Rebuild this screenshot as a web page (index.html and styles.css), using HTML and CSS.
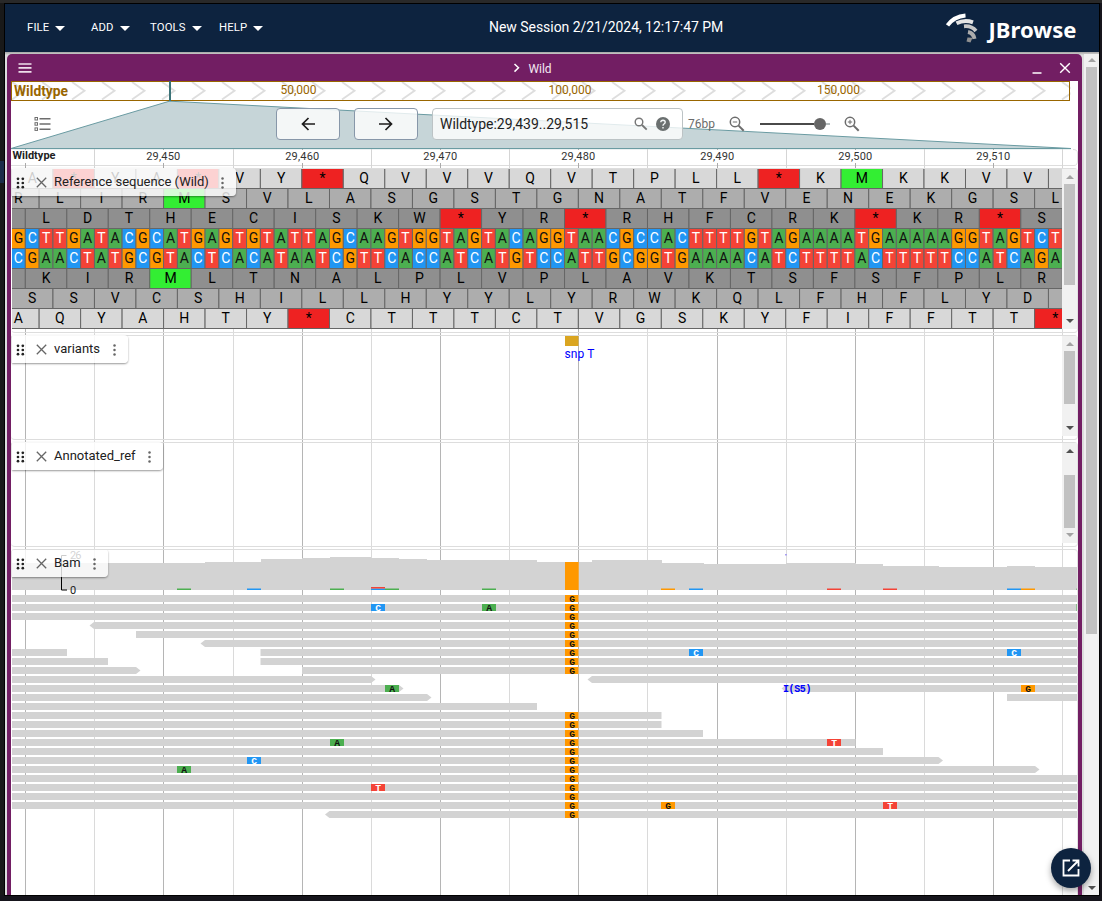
FILE: index.html
```html
<!DOCTYPE html>
<html lang="en">
<head>
<meta charset="utf-8">
<title>JBrowse</title>
<link rel="stylesheet" href="styles.css">
</head>
<body>
<div class="desktop">
  <div class="app">
    <header class="appbar">
      <nav class="menus">
        <button class="menu">FILE<i class="caret"></i></button>
        <button class="menu menu-add">ADD<i class="caret"></i></button>
        <button class="menu menu-tools">TOOLS<i class="caret"></i></button>
        <button class="menu menu-help">HELP<i class="caret"></i></button>
      </nav>
      <div class="session">New Session 2/21/2024, 12:17:47 PM</div>
      <svg class="logo" width="134" height="36" viewBox="944 11 134 36">
        <g fill="none">
          <path d="M947.500 26.300Q954 17.300 965.500 16.400" stroke="#fff" stroke-width="4"/>
          <path d="M956.500 24.300Q964.500 20.300 973 23.300" stroke="#e4e4e4" stroke-width="4"/>
          <path d="M964 27.300Q971.500 26.500 976 32" stroke="#c8c8c8" stroke-width="3.800"/>
          <path d="M968 33Q973.500 34 974.500 39.800" stroke="#acacac" stroke-width="4"/>
          <path d="M967.500 38.500L972.500 38.800L970.500 43.500L966.500 42.500Z" fill="#8f8f8f"/>
        </g>
        <text class="logo-text" x="988.500" y="38.500" textLength="88" lengthAdjust="spacingAndGlyphs">JBrowse</text>
      </svg>
    </header>
    <div class="workspace">
      <main class="view">
        <div class="view-bar">
          <svg width="16" height="12" viewBox="0 0 16 12"><path d="M1.500 2h13M1.500 5.900h13M1.500 9.900h13" stroke="#eedfec" stroke-width="1.700"/></svg>
          <div class="view-name"><svg width="8" height="10" viewBox="0 0 8 10"><path d="M1.500 1L5.500 4.800L1.500 8.600" fill="none" stroke="#fff" stroke-width="1.500"/></svg><span>Wild</span></div>
          <div class="view-actions">
            <svg width="10" height="12" viewBox="0 0 10 12"><path d="M.5 11h9" stroke="#fff" stroke-width="1.500"/></svg>
            <svg width="12" height="12" viewBox="0 0 12 12"><path d="M1.200 1.200l9.600 9.600M10.800 1.200l-9.600 9.600" stroke="#fff" stroke-width="1.400"/></svg>
          </div>
        </div>
        <div class="view-body">
          <svg class="overview" id="overview" width="1067" height="20" viewBox="11 81 1067 20"></svg>
          <div class="navigation">
            <svg class="zoom-shape" width="1067" height="48" viewBox="11 101 1067 48"><path d="M11 148.500L169 101.300H172L1071 148.500Z" fill="#c6d5d8" stroke="#6a9ba2"/></svg>
            <button class="selector"><svg width="18" height="16" viewBox="0 0 18 16"><g fill="none" stroke="#6d6d6d" stroke-width="1"><rect x="1" y="1.500" width="2.500" height="2.500"/><rect x="1" y="6.700" width="2.500" height="2.500"/><rect x="1" y="11.900" width="2.500" height="2.500"/><path d="M5.500 2.800H16.500M5.500 8H16.500M5.500 13.200H16.500" stroke-width="1.500"/></g></svg></button>
            <button class="pan pan-left"><svg width="16" height="16" viewBox="0 0 16 16"><path d="M15 8H2.500M8.500 2L2.500 8L8.500 14" fill="none" stroke="#1c1c1c" stroke-width="1.700"/></svg></button>
            <button class="pan pan-right"><svg width="16" height="16" viewBox="0 0 16 16"><path d="M1 8H13.500M7.500 2L13.500 8L7.500 14" fill="none" stroke="#1c1c1c" stroke-width="1.700"/></svg></button>
            <div class="search">
              <span class="location">Wildtype:29,439..29,515</span>
              <svg width="14" height="14" viewBox="0 0 14 14"><g fill="none" stroke="#767676"><circle cx="5" cy="5" r="3.800" stroke-width="1.400"/><path d="M8 8L12.700 12.700" stroke-width="1.800"/></g></svg>
              <svg class="help" width="14" height="14" viewBox="0 0 14 14"><circle cx="7" cy="7" r="7" fill="#6b7070"/><path d="M4.800 5.300Q4.900 3.300 7 3.300Q9.200 3.400 9.200 5.200Q9.200 6.200 8 7Q7 7.700 7 8.800M7 10v1.500" fill="none" stroke="#f4f7f7" stroke-width="1.400"/></svg>
            </div>
            <span class="span-bp">76bp</span>
            <svg class="zoom-out" width="16" height="16" viewBox="0 0 16 16"><g fill="none" stroke="#6c6c6c"><circle cx="6" cy="6" r="4.700" stroke-width="1.500"/><path d="M9.600 9.600L14.700 14.700" stroke-width="2"/><path d="M3.800 6h4.400"/></g></svg>
            <div class="slider"><i class="slider-fill"></i><i class="slider-knob"></i><i class="slider-rest"></i></div>
            <svg class="zoom-in" width="16" height="16" viewBox="0 0 16 16"><g fill="none" stroke="#6c6c6c"><circle cx="6" cy="6" r="4.700" stroke-width="1.500"/><path d="M9.600 9.600L14.700 14.700" stroke-width="2"/><path d="M3.800 6h4.400M6 3.800v4.400"/></g></svg>
          </div>
          <svg class="scalebar" id="scalebar" width="1067" height="19" viewBox="11 149 1067 19"></svg>
          <div class="tracks">
            <svg class="grid-lines" id="grid" width="1067" height="727" viewBox="11 168 1067 727"></svg>
            <section class="track track-ref">
              <svg id="sequence" width="1051" height="163" viewBox="11 169 1051 163"></svg>
              <div class="scroll"><i class="up off"></i><i class="thumb"></i><i class="down"></i></div>
              <div class="label"><svg class="drag" width="9" height="12"></svg><svg class="close" width="11" height="11"></svg><span>Reference sequence (Wild)</span><svg class="more" width="3" height="12"></svg></div>
            </section>
            <section class="track track-variants">
              <svg width="1051" height="103" viewBox="11 336 1051 103"><rect x="565" y="336" width="13.500" height="10" fill="#daa520"/><text class="feature" x="564.500" y="358" textLength="30">snp T</text></svg>
              <div class="scroll"><i class="up off"></i><i class="thumb"></i><i class="down"></i></div>
              <div class="label"><svg class="drag" width="9" height="12"></svg><svg class="close" width="11" height="11"></svg><span>variants</span><svg class="more" width="3" height="12"></svg></div>
            </section>
            <section class="track track-annotated">
              <svg width="1051" height="103"></svg>
              <div class="scroll"><i class="up"></i><i class="thumb"></i><i class="down off"></i></div>
              <div class="label"><svg class="drag" width="9" height="12"></svg><svg class="close" width="11" height="11"></svg><span>Annotated_ref</span><svg class="more" width="3" height="12"></svg></div>
            </section>
            <section class="track track-bam">
              <svg id="bam" width="1067" height="345" viewBox="11 550 1067 345"></svg>
              <div class="label"><svg class="drag" width="9" height="12"></svg><svg class="close" width="11" height="11"></svg><span>Bam</span><svg class="more" width="3" height="12"></svg></div>
            </section>
          </div>
        </div>
      </main>
      <div class="scroll page-scroll"><i class="up off"></i><i class="thumb"></i><i class="down"></i></div>
    </div>
    <button class="fab"><svg width="20" height="20" viewBox="0 0 20 20"><path d="M9 2.500H2.500V17.500H17.500V11M11.500 2.500H17.500V8.500M17 3L7 13" fill="none" stroke="#fff" stroke-width="1.800"/></svg></button>
  </div>
</div>
<script src="main.js"></script>
</body>
</html>
```
FILE: styles.css
```css
* { box-sizing: border-box; }
body { margin: 0; font-family: Roboto, "Liberation Sans", sans-serif; color: #212121; overflow: hidden; }
button { font: inherit; border: 0; padding: 0; background: none; color: inherit; }
svg { display: block; flex: none; }
text { font-family: Roboto, "Liberation Sans", sans-serif; }

.desktop { width: 1102px; height: 901px; padding: 4px 3px 6px 5px; background: linear-gradient(#1c2d4a, #1c2d4a) 0 161px / 4px 22px no-repeat, linear-gradient(#000, #000) 4px 3px / 1096px 893px no-repeat, linear-gradient(#292929, #292929) 0 0 / 1102px 3px no-repeat, linear-gradient(#191919, #191919) 0 0 / 5px 895px no-repeat, #16151c; }
.app { position: relative; height: 891px; display: flex; flex-direction: column; background: #c9c9c9; overflow: hidden; }
.appbar { height: 48px; flex: none; display: flex; align-items: center; background: #0d233f; color: #fff; }
.menus { display: flex; flex: none; padding-left: 22px; width: 484px; }
.menu { display: flex; align-items: center; font-size: 11.3px; letter-spacing: .15px; gap: 6px; width: 64px; line-height: 16px; margin-top: -1px; }
.menu-add { width: 59px; }
.menu-tools { width: 69px; }
.caret { border: 5px solid transparent; border-top-color: #fff; border-bottom: 0; margin-top: 1px; }
.session { font-size: 14px; letter-spacing: -.04px; white-space: nowrap; margin-top: -2px; }
.logo { margin: -1px 21px 0 auto; }
.logo-text { font: bold 22px "Noto Sans", sans-serif; fill: #fff; }

.workspace { flex: 1; min-height: 0; display: flex; padding: 2px 0 0 2px; background: linear-gradient(#a5a5a5, #c8c8c8 2px, #ddd 3px); justify-content: space-between; }
.view { width: 1075px; padding: 0 4px; background: #721e63; border-radius: 5px 5px 0 0; }
.view-bar { height: 27px; display: flex; align-items: center; justify-content: space-between; padding: 0 7px 0 6px; color: #f3e9f1; }
.view-name { display: flex; align-items: center; gap: 7px; font-size: 12px; padding-top: 1px; }
.view-name span { padding-top: 2px; }
.view-actions { display: flex; gap: 17px; }
.view-body { width: 1067px; height: 814px; background: #fff; border-radius: 0 4px 0 0; }

.navigation { height: 48px; position: relative; display: flex; align-items: center; padding: 0 0 2px 21px; }
.zoom-shape { position: absolute; left: 0; top: 0; }
.navigation > :not(.zoom-shape) { position: relative; }
.selector { width: 244px; padding-left: 2px; }
.pan { width: 64px; height: 32px; display: grid; place-items: center; border: 1px solid #8797a9; border-radius: 4px; background: rgba(255,255,255,.8); }
.pan-right { margin-left: 14px; }
.search { width: 251px; height: 32px; margin-left: 14px; padding: 0 12px 0 7px; display: flex; align-items: center; border: 1px solid #bcc3c5; border-radius: 4px; background: rgba(255,255,255,.8); }
.location { width: 194px; font-size: 14px; letter-spacing: -.02px; }
.help { margin-left: 8px; }
.span-bp { margin-left: 5px; font-size: 12px; width: 41px; color: #6b6b6b; }
.slider { display: flex; align-items: center; margin-left: 15px; }
.slider-fill { width: 54px; height: 2px; background: #4a4a4a; }
.slider-knob { width: 12px; height: 12px; border-radius: 50%; background: #666; }
.slider-rest { width: 4px; height: 2px; background: #b5bcbd; }
.zoom-in { margin-left: 14px; }

.tracks { position: relative; height: 727px; }
.grid-lines { position: absolute; left: 0; top: 0; }
.track { position: relative; display: flex; height: 105px; margin-bottom: 2px; border: 1px solid #ddd; border-left: 0; border-right-color: #e2e2e2; border-radius: 4px; }
.track-ref { height: 165px; }
.track-bam { height: 360px; border-bottom: 0; overflow: hidden; }
.label { position: absolute; left: 1px; top: -1px; height: 28px; display: flex; align-items: center; padding: 0 12px 1px 4px; font-size: 13px; letter-spacing: 0; line-height: 18px; background: rgba(255,255,255,.8); border-radius: 0 4px 4px 0; box-shadow: 0 1px 2px rgba(0,0,0,.4); white-space: nowrap; }
.label .close { margin: 2px 7px 0 11px; }
.label .drag { margin-top: 2px; }
.label .more { margin: 2px 0 0 12.500px; }

.scroll { width: 15px; height: 100px; flex: none; background: #f1f1f1; display: flex; flex-direction: column; align-items: center; position: relative; }
.track-ref .scroll { height: 160px; }
.thumb { width: 11px; height: 53px; background: #c1c1c1; margin-top: 5px; }
.track-ref .thumb { height: 101px; }
.track-annotated .thumb { margin-top: 22px; }
.up, .down { border: 4px solid transparent; }
.up { border-bottom-color: #505050; border-top: 0; margin-top: 6px; }
.down { border-top-color: #505050; border-bottom: 0; margin-top: auto; margin-bottom: 6px; }
.up.off { border-bottom-color: #a3a3a3; }
.down.off { border-top-color: #a3a3a3; }
.page-scroll { width: 15px; height: 841px; }
.page-scroll .up { margin-top: 4px; }
.page-scroll .down { margin-bottom: 5px; }
.page-scroll .thumb { height: 567px; }

.fab { position: absolute; right: 8px; bottom: 7px; width: 40px; height: 40px; border-radius: 50%; background: #0d233f; display: grid; place-items: center; box-shadow: 0 3px 6px rgba(0,0,0,.35); }

.overview-label { font-size: 12px; fill: #996600; }
.overview-name { font-size: 14px; font-weight: bold; fill: #996600; }
.tick-label { font-size: 11px; fill: #333; text-anchor: middle; }
.tick-name { font-size: 11px; font-weight: bold; fill: #222; }
.residue { font-size: 14px; text-anchor: middle; }
.feature { font-size: 12px; fill: #0000ff; }
.mismatch { font: bold 9.700px "Liberation Mono", monospace; text-anchor: middle; }
.insertion { font: bold 10px "Liberation Mono", monospace; fill: #0000ff; }
.axis-label { font-size: 11px; fill: #222; }
```
FILE: main.js
```js
const draw = (id, markup) => { document.getElementById(id).innerHTML = markup; };
const rect = (x, y, w, h, fill, extra = '') => `<rect x="${x}" y="${y}" width="${w}" height="${h}" fill="${fill}" ${extra}/>`;
const text = (cls, x, y, s, extra = '') => `<text class="${cls}" x="${x}" y="${y}" ${extra}>${s}</text>`;
const BASE = { A: '#4caf50', C: '#2196f3', G: '#ff9800', T: '#f44336' };
const INK = { A: '#111', C: '#fff', G: '#111', T: '#fff' };
const BP = 13.826, LEFT = 11.5;
const LINES = [25, 94, 163, 233, 302, 371, 440, 509, 578, 647, 717, 786, 855, 924, 993, 1062];

/* track label icons */
document.querySelectorAll('.drag').forEach(e => {
  e.innerHTML = [2, 6.800].map(x => [1.800, 6, 10.200].map(y => `<circle cx="${x}" cy="${y}" r="1.350" fill="#222"/>`).join('')).join('');
});
document.querySelectorAll('.close').forEach(e => { e.innerHTML = '<path d="M.8 .8L10.200 10.200M10.200 .8L.8 10.200" stroke="#666" stroke-width="1.300"/>'; });
document.querySelectorAll('.more').forEach(e => { e.innerHTML = [1.600, 6, 10.400].map(y => `<circle cx="1.500" cy="${y}" r="1.250" fill="#666"/>`).join(''); });

/* whole-genome overview */
let o = '';
for (let x = 12; x < 1068; x += 30) o += `<path d="M${x} 82L${x + 12.500} 90.800L${x} 99.500" fill="none" stroke="#dedede" stroke-width="1.900"/>`;
o += rect(1070.500, 81, 8, 20, '#fff');
o += '<rect x="11.500" y="81.500" width="1058" height="19" fill="none" stroke="#996600"/>';
o += rect(169, 81, 2, 20, '#3b7378');
o += text('overview-name', 14, 95.500, 'Wildtype', 'textLength="54" lengthAdjust="spacingAndGlyphs"');
o += text('overview-label', 280.500, 94, '50,000', 'textLength="36"') + text('overview-label', 548.500, 94, '100,000', 'textLength="43"') + text('overview-label', 817, 94, '150,000', 'textLength="43"');
draw('overview', o);

/* coordinate scale */
let s = '<path d="M11 165.500H1074Q1077.500 165.500 1077.500 161V153Q1077.500 149.500 1073 149.500" fill="none" stroke="#ddd"/>' + '<path d="M11 149H1071" stroke="#a8c4c8" stroke-width=".5"/>';
LINES.forEach((x, i) => {
  if (i % 2) s += rect(x, 149, 1, 19, '#d5d5d5');
  else {
    s += rect(x, 149, 1, 1, '#aaa') + rect(x, 163, 1, 5, '#aaa');
    if (i) s += text('tick-label', x + .2, 160, '29,' + (440 + i * 5), 'textLength="34"');
  }
});
s += text('tick-name', 12.500, 159, 'Wildtype', 'textLength="43" lengthAdjust="spacingAndGlyphs"');
draw('scalebar', s);
draw('grid', LINES.map((x, i) => rect(x, 168, 1, 727, i % 2 ? '#dadada' : '#b5b5b5')).join(''));

/* reference sequence with six translation frames */
const forward = 'GCTTGATACGCATGAGTGTATTAGCAAGTGGTAGTACAGGTAACGCCACTTTTGTAGAAAATGAAAAAGGTAGTCT';
const complement = { A: 'T', T: 'A', C: 'G', G: 'C' };
const frames = [
  [0, 168.500, '#d8d8d8', 'A*YA*VY*QVVVQVTPLL*KMKKVV '],
  [-1, 188.500, '#adadad', 'RLIRMSVLASGSTGNATFVENEKGSL'],
  [-2, 208.500, '#8f8f8f', ' LDTHECISKW*YR*RHFCRK*KR*S'],
  [-2, 268.500, '#8f8f8f', ' KIRMLTNALPLVPLAVKTSFSFPLR'],
  [0, 288.500, '#adadad', 'SSVCSHILLHYYLYRWKQLFHFLYD '],
  [-1, 308.500, '#d8d8d8', 'AQYAHTY*CTTTCTVGSKYFIFFTT*']
];
const STROKE = 'stroke="#666" stroke-width="1"';
let q = '';
for (const [start, y, fill, residues] of frames) {
  [...residues].forEach((r, i) => {
    const x = LEFT + (start + i * 3) * BP;
    q += rect(x, y, BP * 3, 20, r === '*' ? '#ee2222' : r === 'M' ? '#33ee33' : fill, STROKE);
    q += text('residue', x + BP * 1.500, y + 14.500, r);
  });
}
[...forward].forEach((b, i) => {
  [[b, 228.500], [complement[b], 248.500]].forEach(([c, y]) => {
    q += rect(LEFT + i * BP, y, BP, 20, BASE[c], STROKE) + text('residue', LEFT + (i + .5) * BP, y + 14.500, c, `fill="${INK[c]}"`);
  });
});
q += rect(11, 168, 1, 164, '#fff');
draw('sequence', q);

/* read coverage */
const GREY = '#d3d3d3';
let b = '';
const coverage = [[12, 563], [205, 562], [261, 559.300], [302, 558], [330, 556.600], [371, 557.700], [399, 559.200], [427, 560.300], [537, 561.500], [592, 560.300], [662, 563], [703.500, 564.200], [786, 563], [855.500, 564.300], [883, 565.800], [938.500, 567.100], [1007, 565.900], [1035, 567.100], [1078]];
for (let i = 0; i < coverage.length - 1; i++) b += rect(coverage[i][0], coverage[i][1], coverage[i + 1][0] - coverage[i][0], 590 - coverage[i][1], GREY, 'shape-rendering="crispEdges"');
b += rect(565, 562, 13.700, 28, BASE.G);
[[177, 'A'], [247, 'C'], [330, 'A'], [371, 'C'], [385, 'A'], [482, 'A'], [661, 'G'], [689, 'C'], [827, 'T'], [883, 'T'], [1007, 'C'], [1021, 'G'], [1076.500, 'A']].forEach(([x, c]) => { b += rect(x, 588.500, 14, 1.500, BASE[c]); });
b += rect(371, 587, 14, 1.500, BASE.T) + rect(785, 554, 2, 1.500, '#a9a0f0');
b += '<path d="M66.500 555.500H61.500V590H67" fill="none" stroke="#000"/>';
b += text('axis-label', 70, 559, '26', 'textLength="11.500"') + text('axis-label', 70, 594, '0');

/* aligned reads: [row, start, end, direction] */
const E = 1078;
const reads = [[0, 12, E], [1, 12, E], [2, 12, E], [3, 94, E, -1], [4, 136, E], [5, 205, E, -1], [6, 12, 67], [6, 260.500, E], [7, 12, 108], [7, 260.500, E], [8, 12, 136, 1], [8, 302, E], [9, 12, 371, 1], [9, 592, E, -1], [10, 12, 399, 1], [10, 786, E, -1], [11, 12, 427, 1], [11, 1007, E], [12, 12, 537], [13, 12, 661.500], [14, 12, 661.500], [15, 12, 703], [16, 12, 855.500], [17, 12, 883], [18, 12, 938.500, 1], [19, 12, 1035, 1], [20, 12, E], [21, 12, E], [22, 12, E], [23, 12, E], [24, 329.500, E, -1]];
for (const [row, x0, x1, dir] of reads) {
  const y = 595 + row * 9;
  b += `<path d="M${x0} ${y}H${x1}${dir === 1 ? `l4.500 3.500l-4.500 3.500` : 'v7'}H${x0}${dir === -1 ? 'l-4.500 -3.500' : ''}Z" fill="${GREY}"/>`;
}
const mismatches = [[1, 371, 'C'], [1, 482, 'A'], [1, 1076.500, 'A'], [6, 689, 'C'], [6, 1007, 'C'], [10, 385, 'A'], [10, 1021, 'G'], [16, 330, 'A'], [16, 827, 'T'], [18, 247, 'C'], [19, 177, 'A'], [21, 371, 'T'], [23, 661, 'G'], [23, 883, 'T']];
for (let r = 0; r < 25; r++) if (r < 9 || r > 12) mismatches.push([r, 565, 'G']);
for (const [row, x, c] of mismatches) {
  b += rect(x, 595 + row * 9, x === 565 ? 13.500 : 14, 7, BASE[c]);
  if (x < 1070) b += text('mismatch', x + 7.100, 602 + row * 9, c, `fill="${INK[c]}"`);
}
b += text('insertion', 783, 692, 'I(S5)', 'textLength="28.500"');
draw('bam', b);
```
